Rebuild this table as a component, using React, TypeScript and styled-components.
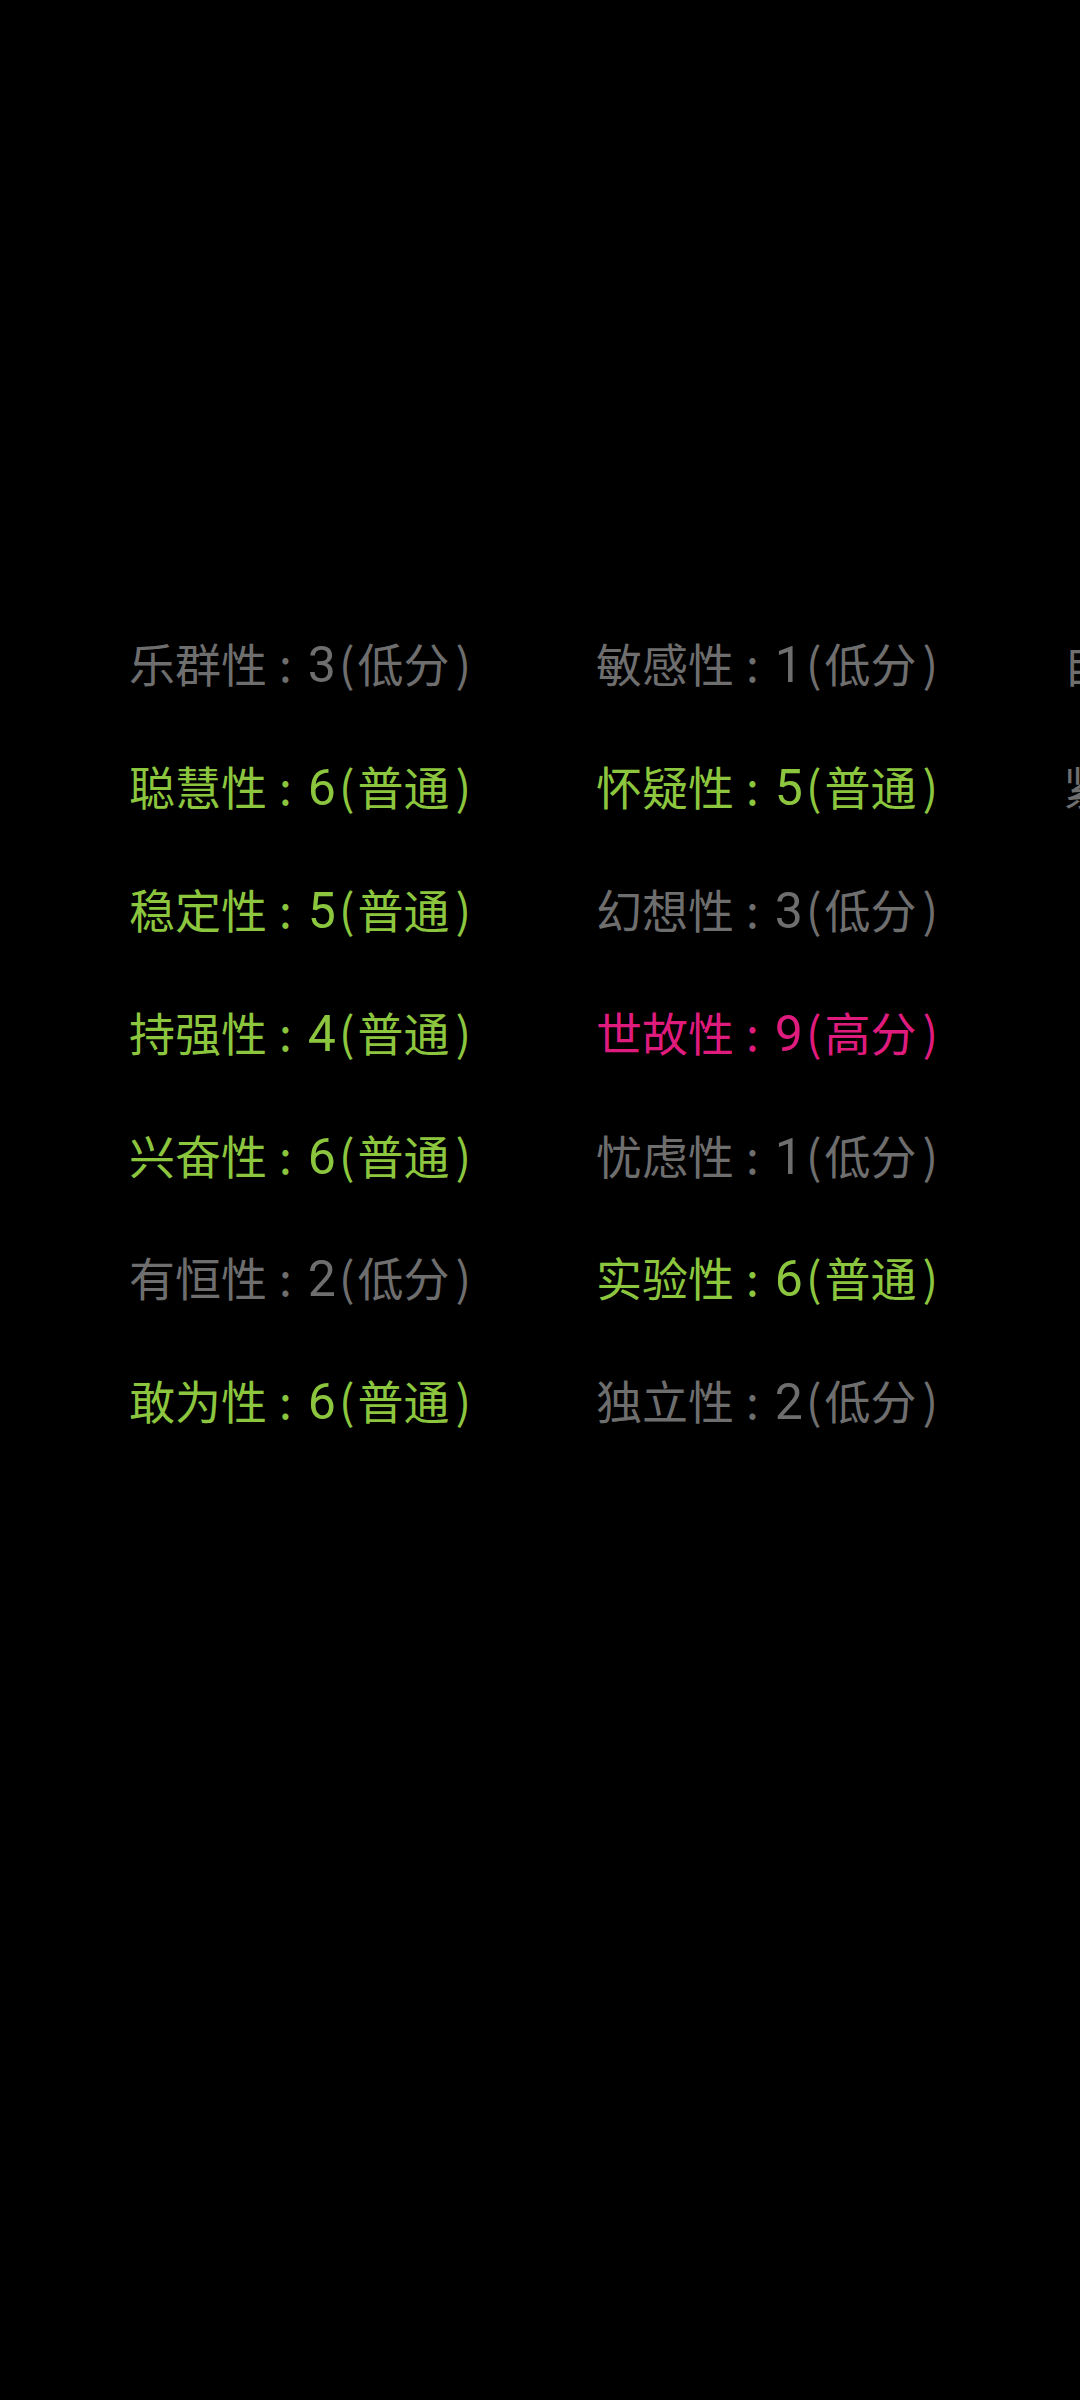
import React from "react";
import styled, { createGlobalStyle } from "styled-components";

const GlobalStyle = createGlobalStyle`
  html, body {
    margin: 0;
    padding: 0;
    background: #000;
    overflow: hidden;
  }
  body {
    width: 1080px;
    height: 2400px;
  }
`;

const Screen = styled.div`
  width: 1080px;
  height: 2400px;
  background: #000;
  overflow: hidden;
  box-sizing: border-box;
  padding-top: 604px;
  padding-left: 129px;
`;

const FactorGrid = styled.div`
  display: grid;
  grid-auto-flow: column;
  grid-template-rows: repeat(7, 122.8px);
  grid-auto-columns: 467px;
  width: max-content;
`;

type Level = "low" | "mid" | "high";

const levelColor: Record<Level, string> = {
  low: "#6e6e6e",
  mid: "#8cc63f",
  high: "#df1b7d",
};

const Factor = styled.div<{ $level: Level }>`
  display: flex;
  align-items: baseline;
  align-self: center;
  white-space: nowrap;
  font-family: "Noto Sans CJK SC", sans-serif;
  font-size: 46px;
  line-height: 1.2;
  color: ${(p) => levelColor[p.$level]};
`;

const Name = styled.span`
  font-family: "Noto Sans CJK SC", sans-serif;
`;

const Colon = styled.span`
  font-family: "Noto Sans CJK SC", sans-serif;
  padding: 0 16px 0 12px;
`;

const Score = styled.span`
  font-family: Roboto, "Noto Sans CJK SC", sans-serif;
  font-size: 50px;
`;

const Paren = styled.span<{ $side: "open" | "close" }>`
  font-family: "Noto Sans CJK SC", sans-serif;
  padding-left: ${(p) => (p.$side === "open" ? "3px" : "6px")};
  padding-right: ${(p) => (p.$side === "open" ? "3px" : "0")};
`;

const factors: { name: string; score: number; level: Level }[] = [
  { name: "乐群性", score: 3, level: "low" },
  { name: "聪慧性", score: 6, level: "mid" },
  { name: "稳定性", score: 5, level: "mid" },
  { name: "持强性", score: 4, level: "mid" },
  { name: "兴奋性", score: 6, level: "mid" },
  { name: "有恒性", score: 2, level: "low" },
  { name: "敢为性", score: 6, level: "mid" },
  { name: "敏感性", score: 1, level: "low" },
  { name: "怀疑性", score: 5, level: "mid" },
  { name: "幻想性", score: 3, level: "low" },
  { name: "世故性", score: 9, level: "high" },
  { name: "忧虑性", score: 1, level: "low" },
  { name: "实验性", score: 6, level: "mid" },
  { name: "独立性", score: 2, level: "low" },
  { name: "自律性", score: 3, level: "low" },
  { name: "紧张性", score: 2, level: "low" },
];

const levelLabel: Record<Level, string> = {
  low: "低分",
  mid: "普通",
  high: "高分",
};

export default function App() {
  return (
    <>
      <GlobalStyle />
      <Screen>
        <FactorGrid>
          {factors.map((f) => (
            <Factor key={f.name} $level={f.level}>
              <Name>{f.name}</Name>
              <Colon>:</Colon>
              <Score>{f.score}</Score>
              <Paren $side="open">(</Paren>
              <Name>{levelLabel[f.level]}</Name>
              <Paren $side="close">)</Paren>
            </Factor>
          ))}
        </FactorGrid>
      </Screen>
    </>
  );
}
